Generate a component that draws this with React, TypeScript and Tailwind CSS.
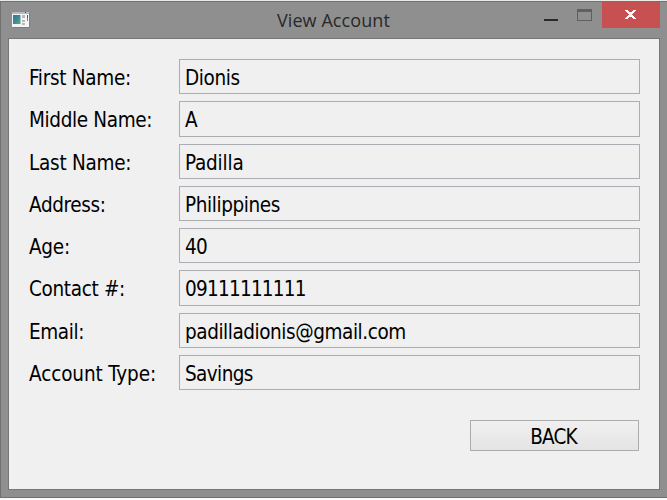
type Row = { label: string; value: string; height: string; labelSpacing: string; valueSpacing: string };

const rows: Row[] = [
  { label: "First Name:", value: "Dionis", height: "h-[35px]", labelSpacing: "tracking-[-0.3px]", valueSpacing: "tracking-[-0.4px]" },
  { label: "Middle Name:", value: "A", height: "h-[36px]", labelSpacing: "tracking-[-0.35px]", valueSpacing: "tracking-[-0.5px]" },
  { label: "Last Name:", value: "Padilla", height: "h-[35px]", labelSpacing: "tracking-[-0.26px]", valueSpacing: "tracking-[-0.2px]" },
  { label: "Address:", value: "Philippines", height: "h-[35px]", labelSpacing: "tracking-[-0.37px]", valueSpacing: "tracking-[-0.4px]" },
  { label: "Age:", value: "40", height: "h-[35px]", labelSpacing: "tracking-[-0.25px]", valueSpacing: "tracking-[-0.8px]" },
  { label: "Contact #:", value: "09111111111", height: "h-[36px]", labelSpacing: "tracking-[-0.34px]", valueSpacing: "tracking-[-0.75px]" },
  { label: "Email:", value: "padilladionis@gmail.com", height: "h-[35px]", labelSpacing: "tracking-[-0.4px]", valueSpacing: "tracking-[-0.44px]" },
  { label: "Account Type:", value: "Savings", height: "h-[35px]", labelSpacing: "tracking-[-0.12px]", valueSpacing: "tracking-[-0.6px]" },
];

function AppIcon() {
  return (
    <svg width="18" height="16" viewBox="0 0 18 16" shapeRendering="crispEdges">
      <defs>
        <linearGradient id="screen" x1="0" y1="0" x2="1" y2="1">
          <stop offset="0" stopColor="#3d6fa5" />
          <stop offset="0.55" stopColor="#3c8f8d" />
          <stop offset="1" stopColor="#63ad68" />
        </linearGradient>
      </defs>
      <rect x="1" y="1" width="17" height="15" fill="#7b8084" />
      <rect width="17" height="15" fill="#f3f5f6" />
      <rect width="17" height="2" fill="#b4bbc1" />
      <rect x="13" width="1" height="1" fill="#48515a" />
      <rect x="1" y="3" width="8" height="9" fill="#a9c3cc" />
      <rect x="1" y="3" width="7" height="9" fill="url(#screen)" />
      <rect x="10" y="3" width="3" height="3" fill="#b7b9bb" />
      <rect x="10" y="8" width="3" height="2" fill="#b7b9bb" />
      <rect x="10" y="11" width="3" height="2" fill="#b7b9bb" />
      <rect x="15" y="3" width="1" height="3" fill="#345f9c" />
      <rect x="15" y="6" width="1" height="3" fill="#4da568" />
    </svg>
  );
}

function TitleBar() {
  return (
    <header className="relative flex h-[36px] shrink-0 items-start pl-[11px]">
      <div className="mt-[10px]"><AppIcon /></div>
      <h1 className="absolute left-[276px] top-[6px] whitespace-nowrap font-['Open_Sans',sans-serif] text-[18px] leading-[24px] tracking-[0.08px] text-[#292929]">
        View Account
      </h1>
      <div className="ml-auto flex items-start">
        <div className="mr-[19px] mt-[17px] h-[2px] w-[14px] bg-[#292929]" />
        <div className="mr-[10px] mt-[7px] h-[12px] w-[15px] border border-t-[3px] border-[#606060]" />
        <div className="mr-[7px] flex h-[26px] w-[58px] pl-[23px] bg-[#c75050] pt-[8px]">
          <svg width="11" height="9" viewBox="0 0 11 9" shapeRendering="crispEdges" fill="#fff">
            <path d="M0 0h3v1h1v1h3v-1h1v-1h3v1h-1v1h-1v1h-1v1h-1v1h1v1h1v1h1v1h1v1h-3v-1h-1v-1h-3v1h-1v1h-3v-1h1v-1h1v-1h1v-1h1v-1h-1v-1h-1v-1h-1v-1h-1z" />
          </svg>
        </div>
      </div>
    </header>
  );
}

export default function App() {
  return (
    <div className="h-[500px] w-[667px] overflow-hidden bg-[#e8edeb] pt-px">
      <div className="flex h-[497px] w-[667px] flex-col border-y border-l border-[#707070] bg-[#8f8f8f]">
        <TitleBar />
        <main className="ml-[7px] h-[452px] w-[652px] border border-[#767676] bg-[#f0f0f0] pt-[20px] font-['DejaVu_Sans_Condensed','DejaVu_Sans',sans-serif] text-[20.5px] font-normal text-black [font-stretch:condensed]">
          <div className="flex flex-col gap-[7px] pl-[20px]">
            {rows.map((r) => (
              <div key={r.label} className={`flex ${r.height}`}>
                <div className={`w-[150px] whitespace-nowrap pt-[7px] leading-[24px] ${r.labelSpacing}`}>{r.label}</div>
                <div className={`w-[461px] whitespace-nowrap border border-[#abadb3] pl-[5px] pt-[6px] leading-[24px] ${r.valueSpacing}`}>{r.value}</div>
              </div>
            ))}
          </div>
          <button className="ml-[461px] mt-[30px] flex h-[31px] w-[169px] justify-center border border-[#acacac] bg-gradient-to-b from-[#f0f0f0] to-[#e4e4e4] pr-[2px] pt-[4px] leading-[24px] tracking-[-0.8px]">
            BACK
          </button>
        </main>
      </div>
      <div className="h-[2px] bg-[#fafafa]" />
    </div>
  );
}
